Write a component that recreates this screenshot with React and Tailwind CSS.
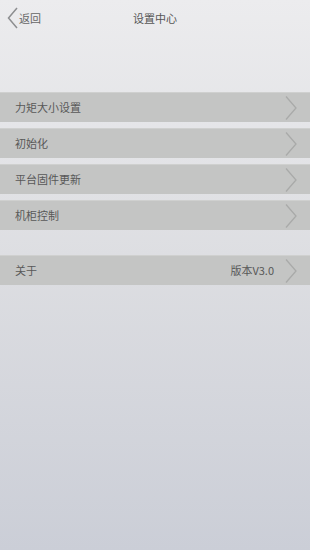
import React from "react";

const font = { fontFamily: '"Noto Sans CJK SC", "Liberation Sans", sans-serif' };

function Chevron() {
  return (
    <svg width="14" height="26" viewBox="0 0 14 26" className="shrink-0">
      <path d="M2 1.5 L12 13 L2 24.5" fill="none" stroke="#a9aaa9" strokeWidth="1.3" />
    </svg>
  );
}

function Row({ label, value }) {
  return (
    <div className="h-[30px] bg-[#c4c5c4] border-t border-[#cfd0cf] flex items-center pl-[15px] pr-[12px]">
      <span className="text-[11px] text-[#585858] flex-1">{label}</span>
      {value && <span className="text-[11px] text-[#585858] mr-[10px]">{value}</span>}
      <Chevron />
    </div>
  );
}

export default function App() {
  return (
    <div
      className="w-[310px] h-[550px] bg-gradient-to-b from-[#ececee] via-[#dcdde1] to-[#cbced7] flex flex-col"
      style={font}
    >
      <div className="h-[36px] relative flex items-center justify-center">
        <div className="absolute left-[7px] top-[7px] flex items-center">
          <svg width="11" height="22" viewBox="0 0 11 22">
            <path d="M10 1 L1.5 11 L10 21" fill="none" stroke="#8d8e90" strokeWidth="1.5" />
          </svg>
          <span className="text-[11px] text-[#666666] ml-[1px]">返回</span>
        </div>
        <span className="text-[11px] text-[#555555]">设置中心</span>
      </div>
      <div className="h-[56px]" />
      <div className="flex flex-col gap-[6px]">
        <Row label="力矩大小设置" />
        <Row label="初始化" />
        <Row label="平台固件更新" />
        <Row label="机柜控制" />
      </div>
      <div className="h-[25px]" />
      <Row label="关于" value="版本V3.0" />
    </div>
  );
}
